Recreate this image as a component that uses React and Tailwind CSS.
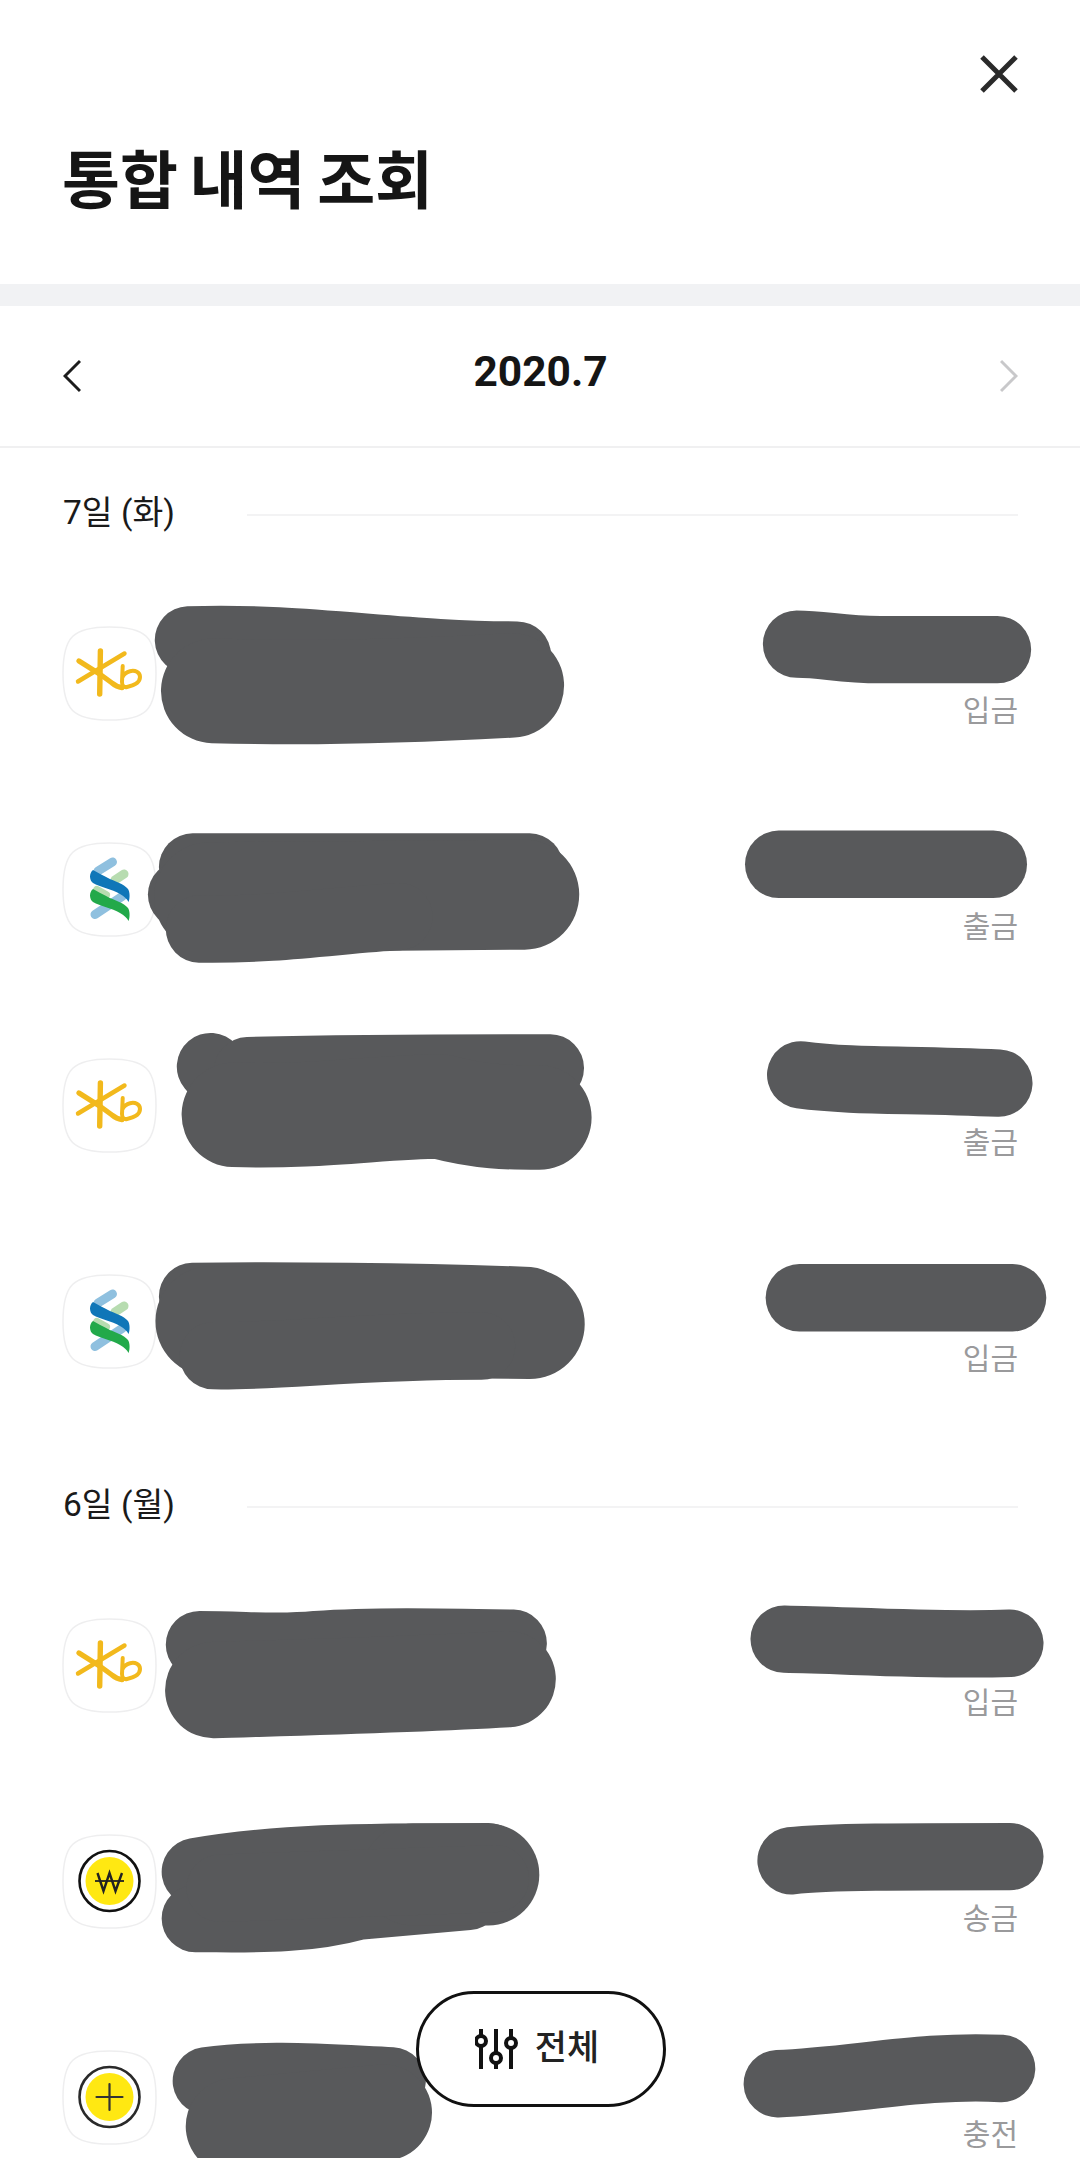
import React from "react";

const SANS = "font-['Roboto','Noto_Sans_CJK_KR',sans-serif]";

// [path, stroke width] in the 785x1568 space of the overlay
const SCRIBBLES = [
  ["M137 465C220 462 290 476 376 476", 49],
  ["M155 502C220 504 300 502 372 498", 76],
  ["M579 468C600 468 610 472 640 472L725 472", 49],
  ["M140 630L385 630", 49],
  ["M132 650L200 650", 49],
  ["M152 652L381 650", 80],
  ["M145 675C200 676 250 668 290 666", 49],
  ["M566 628L722 628", 49],
  ["M153 775L170 795", 49],
  ["M180 778C260 776 330 776 400 776", 49],
  ["M170 810C230 812 280 804 320 804C350 812 370 812 392 812", 76],
  ["M582 781C620 786 660 784 726 787", 49],
  ["M140 942C200 941 300 942 385 945", 49],
  ["M153 960L385 962", 80],
  ["M155 985C200 986 260 978 350 978", 49],
  ["M581 943L736 943", 49],
  ["M145 1195C180 1195 200 1198 230 1195C270 1192 320 1193 373 1194", 49],
  ["M155 1228C220 1226 300 1224 369 1220", 70],
  ["M570 1191C620 1192 680 1196 734 1194", 49],
  ["M142 1360C200 1350 260 1349 355 1349", 49],
  ["M142 1394C180 1394 220 1396 260 1385L340 1378", 49],
  ["M300 1362L355 1362", 74],
  ["M160 1372L360 1365", 49],
  ["M575 1352C600 1349 660 1349 734 1349", 49],
  ["M150 1512C190 1506 240 1510 285 1512", 49],
  ["M170 1545L279 1535", 70],
  ["M565 1514C620 1512 670 1500 728 1503", 49],
];

function KbLogo() {
  return (
    <g fill="none" stroke="#f2b91c" strokeLinecap="round" strokeLinejoin="round">
      <path d="M38.4 25L37.7 68" strokeWidth="5.4" />
      <path d="M16 55.5L62.5 27.5" strokeWidth="4.4" />
      <path d="M17 35L38.4 48.5L50 57C53 59.5 56 61 60 61.6" strokeWidth="5.2" />
      <path d="M60.7 40L60 56C60 60 62 61.6 65 61C72 59.5 78 56.5 78 51C78 46 73 44 68 45.2C64.5 46 62 48 60.5 51" strokeWidth="4" />
    </g>
  );
}

function ScLogo() {
  return (
    <g>
      <path d="M50.5 20L36 29" stroke="#8fc0df" strokeWidth="9" strokeLinecap="round" />
      <path d="M62 32L53 38" stroke="#b7dcb0" strokeWidth="9" strokeLinecap="round" />
      <path d="M35 48L44 53" stroke="#b7dcb0" strokeWidth="8" strokeLinecap="round" />
      <path d="M60 54.5L33 72.5" stroke="#8fc0df" strokeWidth="9" strokeLinecap="round" />
      <path d="M31 28C27 31 27 38 31 41C38 45 50 47 58 52C62 54 65 57 66.6 60C68 56 68 50 66 47C62 42 52 39 46 36C40 33 35 30 31 28Z" fill="#0f76b8" />
      <path d="M31 47C27 50 27 57 31 60C38 64 50 66 58 71C62 73 65 76 66.6 79C68 75 68 69 66 66C62 61 52 58 46 55C40 52 35 49 31 47Z" fill="#22a94a" />
    </g>
  );
}

function WonLogo() {
  return (
    <g fill="none">
      <circle cx="47.5" cy="47" r="24" fill="#ffe812" />
      <circle cx="47.5" cy="47" r="30" stroke="#111" strokeWidth="2.6" />
      <path d="M35.5 39L41.5 57L47.5 39L53.5 57L60 39" stroke="#222" strokeWidth="2.4" />
      <path d="M33 47H62" stroke="#222" strokeWidth="1.8" />
    </g>
  );
}

function PlusLogo() {
  return (
    <g fill="none">
      <circle cx="47.5" cy="47" r="24" fill="#ffe812" />
      <circle cx="47.5" cy="47" r="30" stroke="#2a2a2a" strokeWidth="2.6" />
      <path d="M34.5 47H60.5M47.5 34V60" stroke="#333" strokeWidth="2.2" strokeLinecap="round" />
    </g>
  );
}

const LOGOS = { kb: KbLogo, sc: ScLogo, won: WonLogo, plus: PlusLogo };

function AppIcon({ type }) {
  const Logo = LOGOS[type];
  return (
    <svg width="95" height="95" viewBox="0 0 95 95" className="-ml-px shrink-0">
      <path
        d="M47.5 1C84 1 94 11 94 47.5C94 84 84 94 47.5 94C11 94 1 84 1 47.5C1 11 11 1 47.5 1Z"
        fill="#fff"
        stroke="#eeeeef"
        strokeWidth="1.5"
      />
      <Logo />
    </svg>
  );
}

function Row({ icon, label }) {
  return (
    <div className="flex h-[114px] justify-between">
      <AppIcon type={icon} />
      <span className="self-end pb-[9px] text-[30px] leading-[40px] text-[#9a9a9c]">{label}</span>
    </div>
  );
}

function Section({ title, rows }) {
  return (
    <section className="mb-[95px]">
      <div className="flex h-[44px] items-center">
        <h2 className="w-[184px] shrink-0 text-[33.5px] leading-[44px] font-normal text-[#1a1a1a]">{title}</h2>
        <div className="mt-[3px] h-[2px] flex-1 bg-[#f3f3f4]" />
      </div>
      <div className="mt-[91px] flex flex-col gap-[102px]">
        {rows.map((row, i) => (
          <Row key={i} icon={row.icon} label={row.label} />
        ))}
      </div>
    </section>
  );
}

export default function App() {
  return (
    <div className={`relative h-[2158px] w-[1080px] overflow-hidden bg-white ${SANS}`}>
      <header className="flex h-[284px] flex-col pr-[62px] pl-[62px]">
        <button className="mt-[55px] self-end" aria-label="닫기">
          <svg width="38" height="38" viewBox="0 0 38 38" className="block">
            <path d="M2 2L36 36M36 2L2 36" stroke="#2a2a2a" strokeWidth="5" />
          </svg>
        </button>
        <h1 className="mt-[49px] text-[63px] leading-[80px] font-bold [word-spacing:-4px] text-[#151515]">통합 내역 조회</h1>
      </header>
      <div className="h-[22px] bg-[#f1f2f4]" />

      <nav className="flex h-[142px] items-center justify-between border-b-2 border-[#f0f0f1] pr-[62px] pl-[63px]">
        <svg width="18" height="34" viewBox="0 0 18 34">
          <path d="M17 2L2 17L17 32" fill="none" stroke="#1c1c1c" strokeWidth="3" />
        </svg>
        <span className="-mt-[8px] text-[42.5px] leading-[56px] font-bold text-[#151515]">2020.7</span>
        <svg width="18" height="34" viewBox="0 0 18 34">
          <path d="M1 2L16 17L1 32" fill="none" stroke="#c8c8ca" strokeWidth="3" />
        </svg>
      </nav>

      <main className="pt-[43px] pr-[62px] pl-[63px]">
        <Section
          title="7일 (화)"
          rows={[
            { icon: "kb", label: "입금" },
            { icon: "sc", label: "출금" },
            { icon: "kb", label: "출금" },
            { icon: "sc", label: "입금" },
          ]}
        />
        <Section
          title="6일 (월)"
          rows={[
            { icon: "kb", label: "입금" },
            { icon: "won", label: "송금" },
            { icon: "plus", label: "충전" },
          ]}
        />
      </main>

      {/* redaction scribbles drawn over the rows */}
      <svg
        viewBox="0 0 785 1568"
        preserveAspectRatio="none"
        className="pointer-events-none absolute inset-0 h-full w-full"
      >
        {SCRIBBLES.map(([d, w], i) => (
          <path key={i} d={d} fill="none" stroke="#58595b" strokeWidth={w} strokeLinecap="round" strokeLinejoin="round" />
        ))}
      </svg>

      <button className="absolute top-[1991px] left-[416px] flex h-[116px] w-[250px] items-center justify-center gap-[16px] rounded-full border-[3px] border-[#111] bg-white pr-[8px]">
        <svg width="44" height="44" viewBox="0 0 44 44" className="shrink-0">
          <g fill="#fff" stroke="#111" strokeWidth="4">
            <path d="M6 2V42M21 2V42M36 2V42" fill="none" />
            <circle cx="6" cy="14" r="5" />
            <circle cx="21" cy="31" r="5" />
            <circle cx="36" cy="16" r="5" />
          </g>
        </svg>
        <span className="text-[35px] leading-[44px] font-medium text-[#222]">전체</span>
      </button>
    </div>
  );
}
